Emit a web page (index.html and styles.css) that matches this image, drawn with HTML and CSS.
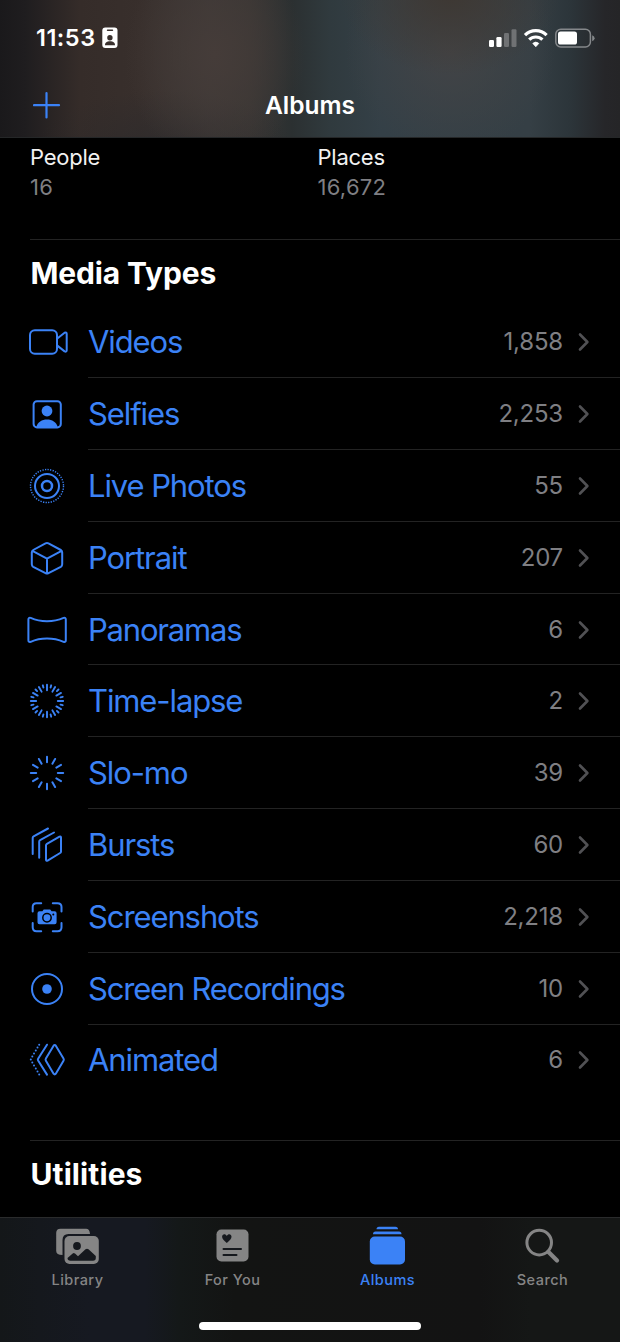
FILE: index.html
```html
<!DOCTYPE html>
<html lang="en">
<head>
<meta charset="utf-8">
<title>Albums</title>
<link rel="stylesheet" href="styles.css">
</head>
<body>
<div class="screen">
  <header class="header">
    <div class="status">
      <div class="status-left">
        <span class="time">11:53</span>
        <svg class="badge-icon" width="16" height="22" viewBox="0 0 16 22"><rect x=".3" y=".5" width="15.2" height="20.5" rx="3" fill="#fff"/><path d="M5.5 3.3h5" stroke="#39302d" stroke-width="1.4" stroke-linecap="round"/><circle cx="7.9" cy="10.7" r="2.7" fill="#39302d"/><path d="M3 18.2c0-3 2-4 5-4s5 1 5 4z" fill="#39302d"/></svg>
      </div>
      <svg class="status-right" width="108" height="24" viewBox="0 0 108 24">
        <g fill="#fff"><rect x="1" y="14" width="5" height="7" rx="1.2"/><rect x="8.4" y="11" width="5.2" height="10" rx="1.2"/></g>
        <g fill="#707274"><rect x="16" y="7" width="5" height="14" rx="1.2"/><rect x="23.5" y="3.3" width="5" height="17.7" rx="1.2"/></g>
        <g fill="none" stroke="#fff" stroke-width="3.2"><path d="M37 9.2a15.2 15.2 0 0 1 21.6 0"/><path d="M41.2 13.7a9.4 9.4 0 0 1 13.2 0"/></g>
        <path d="M47.8 20.7l-3-3.3a4.6 4.6 0 0 1 6 0z" fill="#fff" stroke="#fff" stroke-width=".8" stroke-linejoin="round"/>
        <rect x="67.8" y="3.3" width="34.6" height="17.6" rx="5" fill="none" stroke="#85888b" stroke-width="1.5"/>
        <rect x="70" y="5.500" width="19" height="13" rx="2.600" fill="#fff"/>
        <path d="M104.200 9.200q2.400 1 2.400 3t-2.400 3z" fill="#85888b"/>
      </svg>
    </div>
    <div class="nav">
      <svg class="plus" width="28" height="28" viewBox="0 0 28 28"><path d="M13.500 2v24.500M1 14.200h25" stroke="#3b82f6" stroke-width="2.200" stroke-linecap="round"/></svg>
      <h1 class="nav-title">Albums</h1>
    </div>
  </header>

  <main class="content">
    <section class="summary">
      <div><div class="summary-name">People</div><div class="summary-count">16</div></div>
      <div><div class="summary-name">Places</div><div class="summary-count">16,672</div></div>
    </section>

    <section class="group">
      <h2 class="group-title">Media Types</h2>
      <ul class="list">
        <li class="row"><svg class="icon" viewBox="-24 -24 48 48"><rect x="-17" y="-11.8" width="27" height="23.6" rx="4.8"/><path d="M10-3.2L17.6-9.2Q19.7-10 19.7-8V8.2Q19.7 10.2 17.6 9.4L10 3.4"/></svg><div class="cell"><span class="label">Videos</span><span class="count">1,858</span><svg class="chev" viewBox="0 0 12 20"><path d="M2 2.5l7.4 7.5L2 17.5"/></svg></div></li>
        <li class="row"><svg class="icon" viewBox="-24 -24 48 48"><rect x="-13.4" y="-12.8" width="27.2" height="26.2" rx="3.4"/><circle class="solid" cx="0" cy="-3" r="5.4"/><path class="solid" d="M-10.8 13.4C-9.5 8-5 5.6 0 5.6S9.500 8 10.800 13.400z"/></svg><div class="cell"><span class="label">Selfies</span><span class="count">2,253</span><svg class="chev" viewBox="0 0 12 20"><path d="M2 2.5l7.4 7.5L2 17.5"/></svg></div></li>
        <li class="row"><svg class="icon" viewBox="-24 -24 48 48"><circle cx="0" cy="0" r="5" stroke-width="2.500"/><circle cx="0" cy="0" r="12"/><circle class="dotted" cx="0" cy="0" r="16.500"/></svg><div class="cell"><span class="label">Live Photos</span><span class="count">55</span><svg class="chev" viewBox="0 0 12 20"><path d="M2 2.5l7.4 7.5L2 17.5"/></svg></div></li>
        <li class="row"><svg class="icon" viewBox="-24 -24 48 48"><path d="M-1.500-14.700Q0-15.500 1.500-14.700L13.800-8Q15.200-7.200 15.200-5.500V6.300Q15.200 8 13.800 8.800L1.500 15.200Q0 16 -1.500 15.200L-13.800 8.800Q-15.200 8 -15.200 6.300V-5.500Q-15.200-7.200-13.800-8zM-14.600-7.200L0 .6 14.600-7.200M0 .6V15.500"/></svg><div class="cell"><span class="label">Portrait</span><span class="count">207</span><svg class="chev" viewBox="0 0 12 20"><path d="M2 2.5l7.4 7.5L2 17.5"/></svg></div></li>
        <li class="row"><svg class="icon" viewBox="-24 -24 48 48"><path d="M-18.600-10.500Q-18.600-12.800-16.300-12.100Q-9-8.800 0-8.800T16.600-12.100Q18.800-12.800 18.800-10.500V10.200Q18.800 12.500 16.600 11.800Q9 8.400 0 8.400T-16.300 11.800Q-18.600 12.500-18.600 10.200z"/></svg><div class="cell"><span class="label tight">Panoramas</span><span class="count">6</span><svg class="chev" viewBox="0 0 12 20"><path d="M2 2.5l7.4 7.5L2 17.5"/></svg></div></li>
        <li class="row"><svg class="icon" viewBox="-24 -24 48 48"><g stroke-width="1.900"><path id="spokes" d="M0-10.800V-16.200M0 10.800V16.200M-10.800 0H-16.200M10.800 0H16.200M5.400-9.350L8.100-14.030M9.350-5.400L14.030-8.100M9.350 5.400L14.030 8.100M5.400 9.350L8.100 14.030M-5.400 9.350L-8.100 14.030M-9.350 5.400L-14.030 8.100M-9.350-5.400L-14.030-8.100M-5.400-9.350L-8.100-14.030"/><path d="M3.600-13.500L4.200-15.700M9.900-9.900L11.500-11.500M13.500-3.600L15.700-4.200M13.500 3.600L15.700 4.200M9.900 9.900L11.500 11.500M3.600 13.500L4.200 15.700M-3.600 13.500L-4.200 15.700M-9.900 9.900L-11.500 11.500M-13.500 3.600L-15.700 4.200M-13.500-3.600L-15.700-4.200M-9.900-9.900L-11.500-11.500M-3.600-13.500L-4.200-15.700"/></g></svg><div class="cell"><span class="label">Time-lapse</span><span class="count">2</span><svg class="chev" viewBox="0 0 12 20"><path d="M2 2.5l7.4 7.5L2 17.5"/></svg></div></li>
        <li class="row"><svg class="icon" viewBox="-24 -24 48 48"><use href="#spokes" stroke-width="2"/></svg><div class="cell"><span class="label">Slo-mo</span><span class="count">39</span><svg class="chev" viewBox="0 0 12 20"><path d="M2 2.5l7.4 7.5L2 17.5"/></svg></div></li>
        <li class="row"><svg class="icon" viewBox="-24 -24 48 48"><path d="M-14.300 9V-7.200Q-14.300-8.200-13.400-8.700L1-16.500M-7.800 12.800V-3.200Q-7.800-4.300-6.900-4.800L7-12.500M-1 14.600V.4Q-1-.7-.1-1.200L12.500-8.300Q14-9 14-7.400V6.400Q14 7.500 13.100 8L.6 15.600Q-1 16.300-1 14.600z"/></svg><div class="cell"><span class="label">Bursts</span><span class="count">60</span><svg class="chev" viewBox="0 0 12 20"><path d="M2 2.5l7.4 7.5L2 17.5"/></svg></div></li>
        <li class="row"><svg class="icon" viewBox="-24 -24 48 48"><path d="M-14.300-5.500V-10Q-14.300-13.800-10.500-13.800H-5.800M5.800-13.800H10.500Q14.500-13.800 14.500-10V-5.500M14.500 5.900V10.300Q14.500 14.300 10.500 14.300H5.800M-5.800 14.300H-10.500Q-14.300 14.300-14.300 10.300V5.900"/><path class="solid" d="M-7.500-5.800H-4.600L-3.300-7.500H3.200L4.600-5.800H7.600Q9.600-5.800 9.600-3.800V5.200Q9.600 7.200 7.600 7.200H-7.500Q-9.500 7.200-9.500 5.200V-3.800Q-9.500-5.800-7.500-5.800z"/><circle class="cut" cx="0" cy=".7" r="4.200"/><circle class="hole" cx="6.300" cy="-2.600" r="1"/></svg><div class="cell"><span class="label">Screenshots</span><span class="count">2,218</span><svg class="chev" viewBox="0 0 12 20"><path d="M2 2.5l7.4 7.5L2 17.5"/></svg></div></li>
        <li class="row"><svg class="icon" viewBox="-24 -24 48 48"><circle cx="0" cy="0" r="15"/><circle class="solid" cx="0" cy="0" r="4.800"/></svg><div class="cell"><span class="label tight">Screen Recordings</span><span class="count">10</span><svg class="chev" viewBox="0 0 12 20"><path d="M2 2.5l7.4 7.5L2 17.5"/></svg></div></li>
        <li class="row last"><svg class="icon" viewBox="-24 -24 48 48"><path d="M6.600-14.300Q7.700-15.800 8.800-14.300L16.500-1.600Q17.200-.4 16.500 .8L8.800 13.700Q7.700 15.200 6.600 13.700L-1.100 .8Q-1.800-.4-1.100-1.600zM0-15.300L-8.900-1.300Q-9.400-.4-8.900 .5L0 14.600"/><g class="dots"><circle cx="-7.800" cy="-15.300" r="1"/><circle cx="-9.500" cy="-12.400" r="1"/><circle cx="-11.200" cy="-9.500" r="1"/><circle cx="-13" cy="-6.500" r="1"/><circle cx="-14.700" cy="-3.500" r="1"/><circle cx="-16.200" cy="-.4" r="1"/><circle cx="-14.700" cy="2.600" r="1"/><circle cx="-13" cy="5.600" r="1"/><circle cx="-11.200" cy="8.600" r="1"/><circle cx="-9.500" cy="11.500" r="1"/><circle cx="-7.800" cy="14.400" r="1"/></g></svg><div class="cell"><span class="label">Animated</span><span class="count">6</span><svg class="chev" viewBox="0 0 12 20"><path d="M2 2.500l7.400 7.500L2 17.500"/></svg></div></li>
      </ul>
    </section>

    <section class="group">
      <h2 class="group-title utilities">Utilities</h2>
    </section>
  </main>

  <footer class="tabbar">
    <nav class="tabs">
      <div class="tab">
        <svg class="tab-icon" viewBox="0.5 0 48 40"><path d="M9 29Q2.700 29 2.700 25V7Q2.700 2.700 7 2.700H32.500Q36.200 2.700 36.500 8H15Q9 8 9 14z"/><rect x="11" y="10" width="34.300" height="28" rx="5"/><circle class="tab-cut" cx="23.500" cy="20" r="3.900"/><path class="tab-cut" d="M14 32L19.200 27.500Q20.300 26.700 21.500 27.600L24.500 30.200 32 23.300Q33.500 22.100 35 23.300L42.300 30V32Q42.300 34.700 39.500 34.700H17Q14 34.700 14 32z"/></svg>
        <span>Library</span>
      </div>
      <div class="tab">
        <svg class="tab-icon" viewBox="0.5 0 48 40"><rect x="8" y="3.500" width="32" height="32" rx="4.800"/><path class="tab-cut" d="M18.300 17C15.500 14.700 13.600 13 13.600 10.800 13.600 7.800 17 7.500 18.300 9.900 19.600 7.500 23 7.800 23 10.800 23 13 21.100 14.700 18.300 17z"/><path class="tab-line" d="M15 23H32.500M15 29H28"/></svg>
        <span>For You</span>
      </div>
      <div class="tab active">
        <svg class="tab-icon" viewBox="0.5 0 48 40"><path d="M13 3.300Q13 .8 15.500 .8H32Q34.500 .8 34.500 3.300zM9.500 8.200Q9.500 5.500 12 5.500H35.500Q38 5.500 38 8.200z"/><rect x="6.300" y="10.500" width="35.200" height="28" rx="5"/></svg>
        <span>Albums</span>
      </div>
      <div class="tab">
        <svg class="tab-icon" viewBox="0.5 0 48 40"><g fill="none" stroke="#858585"><circle cx="20.700" cy="16.600" r="12.300" stroke-width="3"/><path d="M30 26L38.500 34.500" stroke-width="4.200" stroke-linecap="round"/></g></svg>
        <span>Search</span>
      </div>
    </nav>
    <div class="home"></div>
  </footer>
</div>
</body>
</html>
```
FILE: styles.css
```css
* { box-sizing: border-box; margin: 0; padding: 0; }
body { background: #000; font-family: Inter, "Liberation Sans", sans-serif; color: #fff; }
.screen { width: 620px; height: 1342px; display: flex; flex-direction: column; overflow: hidden; background: #000; }

.header {
  height: 138px; flex: none; border-bottom: 1px solid #252728;
  background:
    radial-gradient(ellipse 110px 80px at 450px -5px, #3e3833 0%, rgba(62,56,51,0) 100%),
    radial-gradient(ellipse 105px 105px at 450px 50px, #434446 0%, rgba(67,68,70,0) 100%),
    radial-gradient(ellipse 90px 110px at 215px 55px, #453c39 0%, rgba(69,60,57,0) 100%),
    radial-gradient(ellipse 130px 60px at 165px 150px, rgba(42,41,43,.7) 0%, rgba(42,41,43,0) 100%),
    linear-gradient(90deg, #1a191b 0, #1f1d1f 25px, #352c29 80px, #382f2c 140px, #3d3836 210px, #393634 250px, #2b3031 292px, #303a3e 330px, #344047 380px, #353f45 530px, #2c353a 570px, #262629 605px, #252527 620px);
}
.status { height: 75px; display: flex; justify-content: space-between; align-items: center; padding: 0 24px 0 36px; }
.status-left { display: flex; align-items: center; gap: 6px; }
.time { font-size: 23.500px; font-weight: 600; line-height: 28px; letter-spacing: .5px; }
.nav { height: 60px; display: grid; grid-template-columns: 28px 1fr 28px; align-items: center; padding: 0 33px; }
.nav-title { font-size: 24.500px; font-weight: 600; line-height: 30px; text-align: center; }

.content { flex: 1; min-height: 0; overflow: hidden; }
.summary { height: 102px; margin-left: 30px; padding-top: 4px; border-bottom: 1px solid #232323; display: grid; grid-template-columns: 287.500px 1fr; font-size: 22px; line-height: 30px; }
.summary-name { color: #f2f2f2; letter-spacing: -.25px; }
.summary-count { color: #7f7f83; letter-spacing: .25px; }
.group-title { font-size: 30px; font-weight: 700; line-height: 36px; height: 66px; padding: 15px 0 0 30.500px; letter-spacing: -.15px; }
.list { list-style: none; }
.row { height: 71.900px; display: flex; padding-left: 23px; align-items: center; }
.icon { width: 48px; height: 48px; flex: none; fill: none; stroke: #3b82f6; stroke-width: 2; stroke-linecap: round; stroke-linejoin: round; }
.icon .solid, .icon .dots { fill: #3b82f6; stroke: none; }
.icon .dotted { stroke-width: 1.400; stroke-linecap: butt; stroke-dasharray: 1.300 1.292; }
.icon .cut { fill: #3b82f6; stroke: #000; stroke-width: 1.500; }
.icon .hole { fill: #000; stroke: none; }
.cell { flex: 1; height: 100%; margin-left: 17px; padding: 1px 30px 0 0; display: flex; align-items: center; border-bottom: 1px solid #232323; }
.row.last { height: 80px; margin-bottom: 35px; padding-bottom: 10px; }
.row.last .cell { border: 0; padding-top: 0; }
.label { flex: 1; color: #3b82f6; font-size: 31px; line-height: 40px; letter-spacing: -1.100px; }
.label.tight { letter-spacing: -1.200px; }
.count { color: #7f7f83; font-size: 24px; line-height: 30px; letter-spacing: -.2px; }
.chev { width: 12px; height: 20px; margin-left: 15px; fill: none; stroke: #515154; stroke-width: 2.600; stroke-linecap: round; stroke-linejoin: round; }
.group + .group { margin-left: 30px; border-top: 1px solid #232323; }
.utilities { padding-left: .5px; letter-spacing: .1px; }

.tabbar { height: 125px; flex: none; border-top: 1px solid #2a2b2c; background: linear-gradient(90deg, #141719 0, #15181d 40px, #161921 90px, #161921 145px, #141818 180px, #131413 235px, #131313 480px, #151716 530px, #151716 620px); display: flex; flex-direction: column; align-items: center; }
.tabs { width: 620px; display: grid; grid-template-columns: repeat(4, 155px); height: 104px; }
.tab { display: flex; flex-direction: column; align-items: center; padding-top: 8px; color: #858585; font-size: 14.500px; font-weight: 500; line-height: 18px; letter-spacing: .45px; gap: 5px; }
.tab-icon { width: 48px; height: 40px; fill: #858585; }
.tab-cut { fill: #15181d; }
.tab-line { fill: none; stroke: #15181d; stroke-width: 2; stroke-linecap: round; }
.active { color: #3b82f6; }
.active .tab-icon { fill: #3b82f6; }
.home { width: 222px; height: 8px; border-radius: 4px; background: #fff; }
```
